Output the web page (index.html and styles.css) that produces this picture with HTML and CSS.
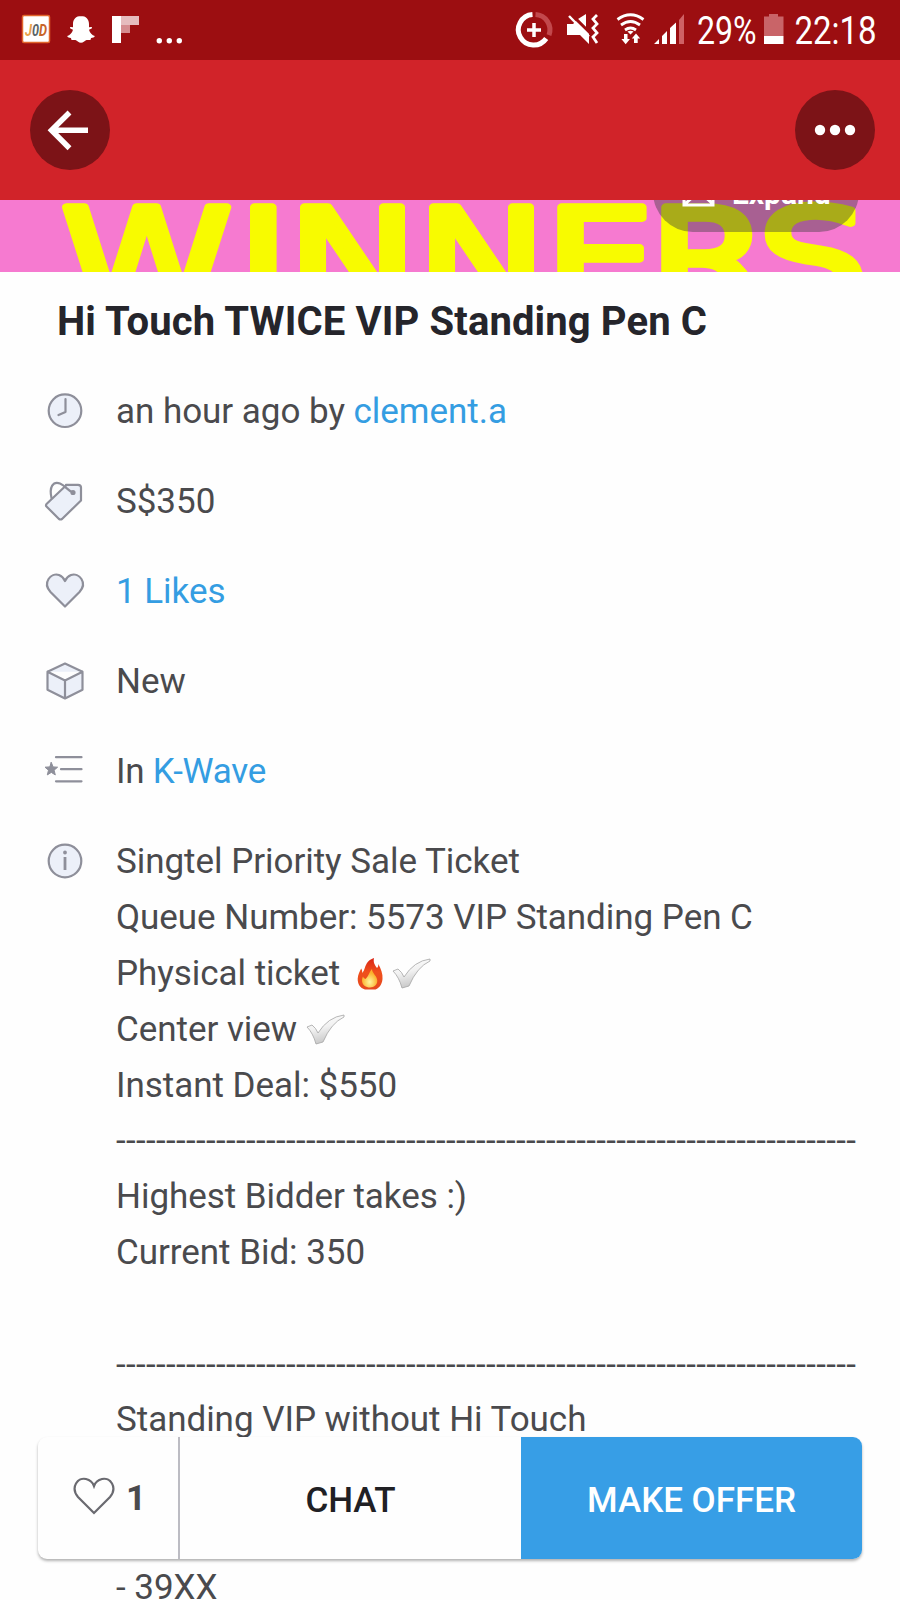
FILE: index.html
```
<!DOCTYPE html>
<html lang="en">
<head>
<meta charset="utf-8">
<title>Hi Touch TWICE VIP Standing Pen C</title>
<link rel="stylesheet" href="styles.css">
</head>
<body>
<div class="screen">
  <div class="status">
    <svg class="status-left" width="200" height="60" viewBox="0 0 200 60">
      <rect x="22.500" y="15.500" width="27" height="27" rx="1.500" fill="#fff" stroke="#e2662c" stroke-width="1.500"/>
      <g class="jod"><text x="25" y="36" textLength="7" lengthAdjust="spacingAndGlyphs" fill="#e8a24a">J</text><text x="32" y="36" textLength="7" lengthAdjust="spacingAndGlyphs" fill="#5a6468">0</text><text x="39" y="36" textLength="8" lengthAdjust="spacingAndGlyphs" fill="#c8642a">D</text></g>
      <path fill="#fff" d="M81 16c-5 0-8 3.500-8 8v3c-1 .5-2.500-.3-3 .4-.5 1 1.800 1.800 3 2.300-.8 3.300-3.200 5.600-5.800 6.300.4 1.500 2.200 1.700 3.600 2 .6.500.2 1.700 1 2 1.500.3 2.700-.4 4.200.2 1.600.8 2.600 2.600 5 2.600s3.400-1.800 5-2.600c1.500-.6 2.700.1 4.200-.2.800-.3.400-1.500 1-2 1.400-.3 3.200-.5 3.600-2-2.600-.7-5-3-5.800-6.300 1.200-.5 3.500-1.300 3-2.300-.5-.7-2 .1-3-.4v-3c0-4.500-3-8-8-8z"/>
      <path fill="#fff" d="M112 16h9v27h-9z"/><path fill="#e6bcbe" d="M121 16h18v9h-18z"/><path fill="#d58c8f" d="M121 25h9v8h-9z"/>
      <g fill="#fff"><circle cx="159.300" cy="40.800" r="2.700"/><circle cx="169.300" cy="40.800" r="2.700"/><circle cx="179.300" cy="40.800" r="2.700"/></g>
    </svg>
    <svg class="status-right" width="400" height="60" viewBox="500 0 400 60">
      <g fill="none" stroke="#fff" stroke-width="5">
        <path d="M532.500 14.500a15.300 15.300 0 1 0 13.700 24"/>
        <path stroke="#c2484c" d="M535.500 14.600a15.300 15.300 0 0 1 13.500 20.500"/>
        <path stroke-width="3.500" d="M527 30h14M534 23v14"/>
      </g>
      <path fill="#fff" d="M567 24h6l3-3 13 12v11l-9-9h-13zM578 19l8-5v13z"/>
      <path stroke="#9c0e11" stroke-width="2.500" d="M572 15l20 20"/>
      <path stroke="#fff" stroke-width="2.500" d="M569 16l20 20.500"/>
      <path fill="none" stroke="#fff" stroke-width="2.800" d="M597 15l-4 4 4 5-4 4 4 5-4 4 4 6"/>
      <g fill="none" stroke="#fff" stroke-width="2.800"><path d="M617.500 19.500q13-9.500 26 0M621 25q9.500-7 19 0M625 30q5.500-4 11 0"/></g>
      <path fill="#fff" d="M627.500 31.500q3-1.500 6 0l-3 3zM624 34h3.500v5h2.500l-4.300 5.300-4.300-5.300h2.600zM634 43v-4.500h-2.200l4.200-5 4.200 5h-2.500V43z"/>
      <path fill="#fff" d="M654 44l5-5v5zM662 36l5-5v13h-5zM670 28l6-5.500V44h-6z"/><path fill="#cf6165" d="M679 20l5-6v30h-5z"/>
      <g class="status-text"><text x="697" y="43.500" textLength="59.500" lengthAdjust="spacingAndGlyphs">29%</text><text x="794.500" y="43.500" textLength="82" lengthAdjust="spacingAndGlyphs">22:18</text></g>
      <path fill="#c96468" d="M764 16.500h5V14h9v2.500h5.500V36H764z"/><path fill="#fff" d="M764 36h19.500v8H764z"/>
    </svg>
  </div>
  <div class="header">
    <div class="round"><svg width="80" height="80"><path fill="none" stroke="#fff" stroke-width="5.500" d="M58 40.300H21M39.500 22.500L21.500 40.300l18 18"/></svg></div>
    <div class="round"><svg width="80" height="80" fill="#fff"><circle cx="25" cy="40" r="5.200"/><circle cx="40" cy="40" r="5.200"/><circle cx="55" cy="40" r="5.200"/></svg></div>
  </div>
  <div class="banner">
    <svg width="900" height="72" viewBox="0 200 900 72">
      <text class="winners" transform="scale(1.05 .82)" y="373" x="58 226.500 274 397 519 618 722">WINNERS</text>
    </svg>
    <div class="expand">
      <svg width="34" height="30"><path fill="none" stroke="#fff" stroke-width="3" d="M2 2h29v25H2zM3 26l10-9h8l10 9"/></svg>
      <span>Expand</span>
    </div>
  </div>
  <h1 class="title"><span>Hi Touch TWICE VIP Standing Pen C</span></h1>
  <div class="row">
    <svg class="icon" viewBox="0 0 44 44"><circle cx="22" cy="21.700" r="16.300"/><path d="M22.500 10v13l-7 3"/></svg>
    <span>an hour ago by <a>clement.a</a></span>
  </div>
  <div class="row">
    <svg class="icon" viewBox="0 0 44 44"><g transform="translate(0 1)"><path d="M23 5.500L3.500 24q-1 1.500 0 2.500L16 39q1.500 1 3 0L38 20.500V7.500Q38 5 35 4.800H23z"/><path fill="none" d="M8.500 18C6 7 10 1 17 3.500c6 2.500 8 7.500 13 9"/><circle class="solid" cx="30" cy="12.500" r="1.500"/></g></svg>
    <span>S$350</span>
  </div>
  <div class="row">
    <svg class="icon" viewBox="0 0 44 44"><path d="M22 37.500L7.500 23C-1 13.500 8 3.500 16 6q4 1.500 6 6 2-4.500 6-6c8-2.500 17 7.500 8.500 17z"/></svg>
    <span><a>1 Likes</a></span>
  </div>
  <div class="row">
    <svg class="icon" viewBox="0 0 44 44"><path d="M22 4.500L39.500 12.700v18L22 39.500 4.500 30.700v-18zM4.500 12.700L22 21.500l17.500-8.800M22 21.500v18"/></svg>
    <span>New</span>
  </div>
  <div class="row">
    <svg class="icon" viewBox="0 0 44 44"><path d="M13 8.200h25.500M18 20.200h20.500M13 32.300h25.500"/><path class="solid" stroke-width="1" d="M8.300 13.500l1.800 4.400 4.500.3-3.500 3 1.200 4.700-4-2.500-4 2.500 1.200-4.700-3.500-3 4.500-.3z"/></svg>
    <span class="category">In <a>K-Wave</a></span>
  </div>
  <div class="row desc">
    <svg class="icon info" viewBox="0 0 44 44"><circle cx="22" cy="22" r="16.300"/><path stroke-width="2.800" stroke-linecap="butt" d="M22 18v13"/><circle class="solid" cx="22" cy="13.500" r=".8"/></svg>
    <div class="lines">
      <p>Singtel Priority Sale Ticket</p>
      <p>Queue Number: 5573 VIP Standing Pen C</p>
      <p>Physical ticket <svg class="fire" width="26" height="33" viewBox="0 0 26 33"><defs><linearGradient id="flame" x2="0" y2="1"><stop offset="0" stop-color="#d92416"/><stop offset=".45" stop-color="#f0501c"/><stop offset="1" stop-color="#e5481f"/></linearGradient><radialGradient id="core" cx=".5" cy=".7"><stop offset="0" stop-color="#fff6a0"/><stop offset="1" stop-color="#fbb02c"/></radialGradient><linearGradient id="tick" x2=".3" y2="1"><stop offset="0" stop-color="#fff"/><stop offset=".5" stop-color="#f2f2f2"/><stop offset="1" stop-color="#c8c8c8"/></linearGradient></defs><path fill="url(#flame)" d="M17 1c-1 5 1 7 3 10 1-1 1.500-2 1.300-4C24 12 26 17 25.500 22c-.5 6-4 9.500-7 10.500H8C3 31 .5 27 .7 21.500 1 17 3 14 4.200 11.500c1 1.500 1 3 1 4.500C9 13 7 4 17 1z"/><path fill="url(#core)" d="M15 12c0 4 4 6 5 10 1.500 5-3 8.500-7 8.500S5 28 5 23.500c0-2 .5-3 1-4 .7 1.500 1.300 2 2.500 2.500C12 19 12 15 15 12z"/></svg><svg class="tick" width="39" height="31" viewBox="0 0 39 31"><path d="M1 13l5-2q4 3 6 8Q22 3 38 1v2Q25 9 17 28l-7 2Q7 19 1 13z"/></svg></p>
      <p>Center view <svg class="tick near" width="39" height="31" viewBox="0 0 39 31"><path d="M1 13l5-2q4 3 6 8Q22 3 38 1v2Q25 9 17 28l-7 2Q7 19 1 13z"/></svg></p>
      <p>Instant Deal: $550</p>
      <p class="dash">--------------------------------------------------------------------------</p>
      <p>Highest Bidder takes :)</p>
      <p>Current Bid: 350</p>
      <p></p>
      <p class="dash">--------------------------------------------------------------------------</p>
      <p>Standing VIP without Hi Touch</p>
      <p></p>
      <p></p>
      <p>- 39XX</p>
    </div>
  </div>
  <div class="actions">
    <div class="like"><svg width="44" height="40" viewBox="0 0 44 40"><path fill="none" stroke="#6a6a70" stroke-width="2.200" d="M22 37L6 21C-2 11 6 1 14 3q6 1.500 8 7 2-5.500 8-7c8-2 16 8 8 18z"/></svg><span>1</span></div>
    <div class="chat">CHAT</div>
    <div class="offer">MAKE OFFER</div>
  </div>
</div>
</body>
</html>
```
FILE: styles.css
```
* { box-sizing: border-box; }
body { margin: 0; }
.screen {
  position: relative;
  width: 900px;
  height: 1600px;
  overflow: hidden;
  background: #fefefe;
  font-family: Roboto, sans-serif;
  font-size: 35px;
  letter-spacing: -.04px;
  color: #4a4a4d;
}
svg { display: block; flex: none; }
.status { display: flex; justify-content: space-between; height: 60px; background: #9c0e11; }
.status-text { font-size: 38px; fill: #fff; }
.jod { font-size: 17px; font-weight: 700; font-style: italic; }
.header { display: flex; justify-content: space-between; align-items: center; height: 140px; padding: 0 25px 0 30px; background: #d12329; }
.round { width: 80px; height: 80px; border-radius: 50%; background: #7c1317; }
.banner { position: relative; height: 71.500px; overflow: hidden; background: #f67ad0; }
.winners { font-family: "DejaVu Sans", sans-serif; font-size: 165px; fill: #f8fb00; stroke: #f8fb00; stroke-width: 9px; stroke-linejoin: round; }
.expand {
  position: absolute;
  right: 41px;
  bottom: 40px;
  display: flex;
  align-items: center;
  gap: 16px;
  width: 206px;
  height: 80px;
  padding: 3px 0 0 29px;
  border-radius: 40px;
  background: rgba(60, 60, 60, .42);
  color: #fff;
  font-size: 30px;
  font-weight: 700;
}
.title { margin: 0; height: 94px; padding-left: 57px; font-size: 40px; line-height: 99px; letter-spacing: .12px; font-weight: 700; color: #25252b; white-space: nowrap; }
.row { display: flex; align-items: center; gap: 29px; height: 90px; padding-left: 43px; white-space: nowrap; }
.row > span { padding-top: 1px; }
.category { letter-spacing: -.3px; }
.icon { width: 44px; height: 44px; fill: #ecf0f9; stroke: #8e8f9a; stroke-width: 2.200; stroke-linejoin: round; stroke-linecap: round; }
.icon .solid { fill: #8e8f9a; }
a { color: #349de2; }
.desc { align-items: flex-start; height: auto; padding-top: 18.500px; }
.info { margin-top: 4.500px; }
.lines p { display: flex; align-items: center; height: 55.800px; margin: 0; white-space: pre; }
.lines .dash { letter-spacing: .33px; }
.fire { margin-left: 8px; }
.tick { margin-left: 9px; fill: url(#tick); stroke: #a5a5a5; stroke-width: .8; }
.tick.near { margin-left: 0; }
.actions {
  position: absolute;
  left: 38px;
  top: 1437px;
  display: flex;
  width: 824px;
  height: 122px;
  border-radius: 9px;
  overflow: hidden;
  background: #fefefe;
  box-shadow: 0 2px 3px rgba(0, 0, 0, .3);
  font-size: 35px;
  font-weight: 500;
}
.actions > div { display: flex; align-items: center; justify-content: center; padding-top: 4px; }
.actions .like { width: 142px; gap: 10px; border-right: 2px solid #bcbcc3; padding: 0 0 0 2px; font-weight: 700; }
.like svg { margin-top: -4px; }
.chat { width: 341px; color: #202024; }
.offer { flex: 1; background: #379ee6; color: #fff; }
```
